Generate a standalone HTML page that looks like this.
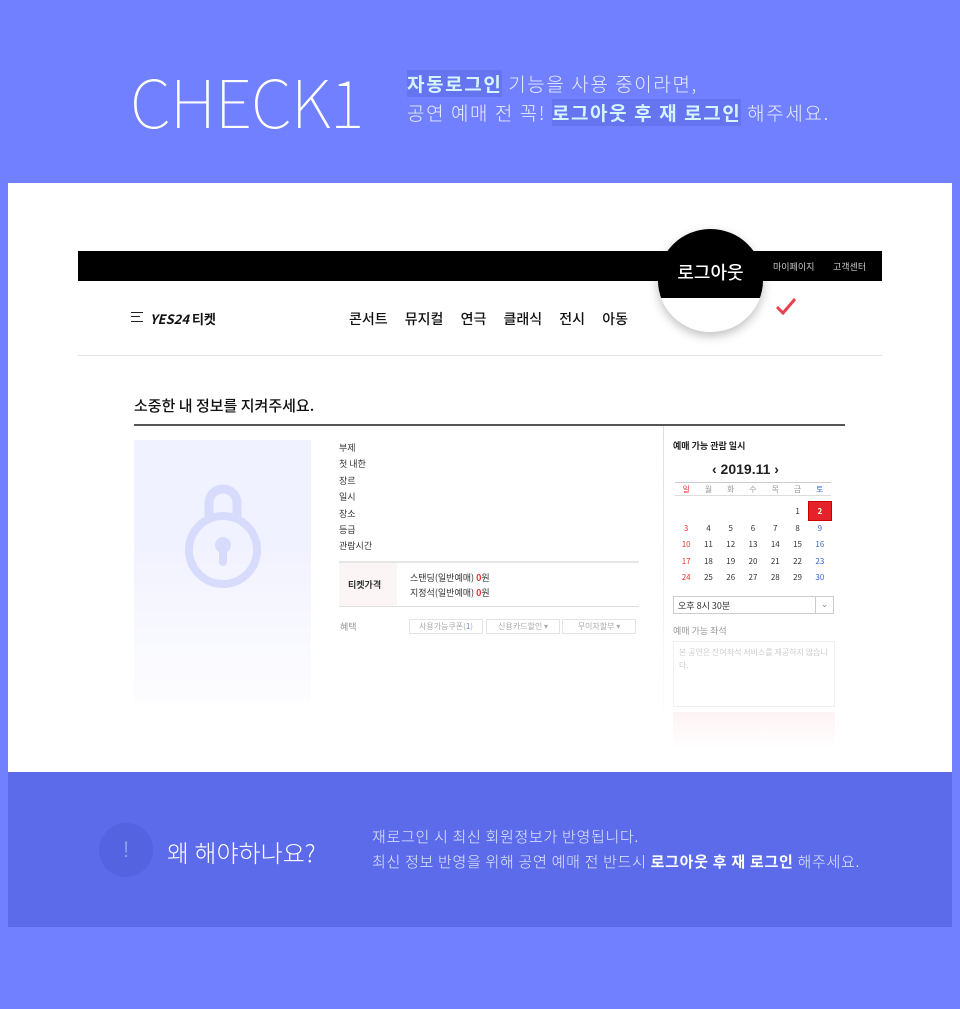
<!DOCTYPE html>
<html><head><meta charset="utf-8"><style>
*{margin:0;padding:0;box-sizing:border-box}
body{width:960px;height:1009px;background:#7180fe;position:relative;overflow:hidden;font-family:"Liberation Sans","Noto Sans CJK KR",sans-serif}
.a{position:absolute}
.k{font-family:"Noto Sans CJK KR","Liberation Sans",sans-serif}
.sm{font-size:9px;color:#333}
</style></head><body>
<div class="a" style="left:130px;top:64px;font-size:66px;font-weight:100;color:#fff;font-family:'Noto Sans CJK KR',sans-serif;letter-spacing:-1px;line-height:72px">CHECK1</div>
<div class="a k" style="left:407px;top:69px;font-size:19px;color:#e8ecff;line-height:29px;font-weight:300;letter-spacing:1.6px">
<div><span style="font-weight:700;color:#d5f4ff;background:#6575f0">자동로그인</span> 기능을 사용 중이라면,</div>
<div>공연 예매 전 꼭! <span style="font-weight:700;color:#d5f4ff;background:#6575f0">로그아웃 후 재 로그인</span> 해주세요.</div></div>

<div class="a" style="left:8px;top:183px;width:944px;height:589px;background:#fff"></div>
<div class="a" style="left:78px;top:251px;width:804px;height:30px;background:#000"></div>
<div class="a k" style="left:773px;top:260px;font-size:9px;color:#ccc">마이페이지</div>
<div class="a k" style="left:833px;top:260px;font-size:9px;color:#ccc">고객센터</div>
<div class="a" style="left:658px;top:229px;width:105px;height:103px;border-radius:50%;background:linear-gradient(#000 0,#000 67%,#fff 67%);box-shadow:0 4px 10px rgba(0,0,0,.25)"></div>
<div class="a k" style="left:658px;top:259px;width:105px;text-align:center;color:#fff;font-size:18px;font-weight:500">로그아웃</div>
<svg class="a" style="left:774px;top:296px" width="24" height="22"><path d="M3 11 L9 17 L21 3" stroke="#e8414f" stroke-width="3" fill="none"/></svg>
<div class="a" style="left:131px;top:312px;width:12px;height:10px;border-top:1.5px solid #222;border-bottom:1.5px solid #222"><div style="margin-top:3px;width:9px;border-top:1.5px solid #222"></div></div>
<div class="a k" style="left:150px;top:309px;font-size:13px;font-weight:700;color:#111"><i>YES24</i> 티켓</div>
<div class="a k" style="left:349px;top:309px;font-size:14px;color:#111;word-spacing:14px;font-weight:500">콘서트 뮤지컬 연극 클래식 전시 아동</div>
<div class="a" style="left:78px;top:355px;width:804px;height:1px;background:#e2e2e2"></div>
<div class="a k" style="left:134px;top:395px;font-size:15px;font-weight:500;color:#111">소중한 내 정보를 지켜주세요.</div>
<div class="a" style="left:134px;top:424px;width:711px;height:2px;background:#555"></div>

<div class="a" style="left:134px;top:440px;width:177px;height:262px;background:linear-gradient(#f1f2ff 40%,#fdfdff)"></div>
<svg class="a" style="left:180px;top:480px" width="90" height="115"><path d="M29 42 V23 a14 14 0 0 1 28 0 V42" stroke="#d8dcfc" stroke-width="9" fill="none"/><circle cx="43" cy="70" r="34" fill="none" stroke="#d8dcfc" stroke-width="8"/><circle cx="43" cy="65" r="8" fill="#d8dcfc"/><rect x="39" y="66" width="8" height="20" rx="4" fill="#d8dcfc"/></svg>

<div class="a k sm" style="left:339px;top:440px;line-height:16.4px">부제<br>첫 내한<br>장르<br>일시<br>장소<br>등급<br>관람시간</div>
<div class="a" style="left:339px;top:561px;width:300px;height:2px;background:#e6e6e6"></div>
<div class="a" style="left:339px;top:563px;width:58px;height:43px;background:#fbf5f5"></div>
<div class="a k" style="left:348px;top:578px;font-size:9px;font-weight:700;color:#333">티켓가격</div>
<div class="a k sm" style="left:410px;top:570px;line-height:15px">스탠딩(일반예매) <b style="color:#e33">0</b>원<br>지정석(일반예매) <b style="color:#e33">0</b>원</div>
<div class="a" style="left:339px;top:606px;width:300px;height:1px;background:#e0e0e0"></div>
<div class="a k" style="left:340px;top:620px;font-size:9px;color:#999">혜택</div>
<div class="a k" style="left:409px;top:619px;width:74px;height:15px;border:1px solid #e4e4e4;font-size:8px;color:#aaa;text-align:center;line-height:13px">사용가능쿠폰(<span style="color:#68c">1</span>)</div>
<div class="a k" style="left:486px;top:619px;width:74px;height:15px;border:1px solid #e4e4e4;font-size:8px;color:#aaa;text-align:center;line-height:13px">신용카드할인 ▾</div>
<div class="a k" style="left:562px;top:619px;width:74px;height:15px;border:1px solid #e4e4e4;font-size:8px;color:#aaa;text-align:center;line-height:13px">무이자할부 ▾</div>

<div class="a" style="left:663px;top:426px;width:1px;height:300px;background:linear-gradient(#ddd,#fff)"></div>
<div class="a k" style="left:673px;top:439px;font-size:9px;font-weight:700;color:#222">예매 가능 관람 일시</div>
<div class="a" style="left:712px;top:461px;font-size:14px;font-weight:700;color:#222">‹ 2019.11 ›</div>
<div class="a" style="left:675px;top:482px;width:156px;border-top:1px solid #ccc;border-bottom:1px solid #ddd;height:14px"></div>
<table class="a k" style="left:675px;top:482px;width:156px;border-collapse:collapse;font-size:8px;color:#333;text-align:center">
<tr style="height:14px;color:#999"><td style="color:#e33">일</td><td>월</td><td>화</td><td>수</td><td>목</td><td>금</td><td style="color:#36c">토</td></tr>
<tr style="height:6px"><td colspan="7"></td></tr>
<tr style="height:18px"><td></td><td></td><td></td><td></td><td></td><td>1</td><td style="background:#e6222a;color:#fff;font-weight:700;outline:1px solid #c00">2</td></tr>
<tr style="height:16.5px"><td style="color:#e33">3</td><td>4</td><td>5</td><td>6</td><td>7</td><td>8</td><td style="color:#36c">9</td></tr>
<tr style="height:16.5px"><td style="color:#e33">10</td><td>11</td><td>12</td><td>13</td><td>14</td><td>15</td><td style="color:#36c">16</td></tr>
<tr style="height:16.5px"><td style="color:#e33">17</td><td>18</td><td>19</td><td>20</td><td>21</td><td>22</td><td style="color:#36c">23</td></tr>
<tr style="height:16.5px"><td style="color:#e33">24</td><td>25</td><td>26</td><td>27</td><td>28</td><td>29</td><td style="color:#36c">30</td></tr></table>
<div class="a k" style="left:673px;top:596px;width:161px;height:18px;border:1px solid #ccc;font-size:9px;color:#333;padding:2px 4px">오후 8시 30분<span style="position:absolute;right:0;top:0;width:18px;height:16px;border-left:1px solid #ccc;text-align:center;color:#888">⌄</span></div>
<div class="a k" style="left:673px;top:624px;font-size:9px;color:#999">예매 가능 좌석</div>
<div class="a k" style="left:673px;top:641px;width:162px;height:66px;border:1px solid #f0f0f0;font-size:8px;color:#ccc;padding:4px 5px;line-height:13px">본 공연은 잔여좌석 서비스를 제공하지 않습니다.</div>
<div class="a" style="left:673px;top:712px;width:162px;height:36px;background:linear-gradient(#fdf3f4,#fff)"></div>

<div class="a" style="left:8px;top:772px;width:944px;height:155px;background:#5b6be9"></div>
<div class="a" style="left:99px;top:823px;width:54px;height:54px;border-radius:50%;background:#5464e0;color:#8d9af0;font-size:22px;text-align:center;line-height:54px;font-weight:100">!</div>
<div class="a k" style="left:167px;top:834px;font-size:24px;color:#fff;font-weight:300">왜 해야하나요?</div>
<div class="a k" style="left:372px;top:824px;font-size:15px;color:#e5e9ff;line-height:25px;font-weight:300;letter-spacing:0.7px">재로그인 시 최신 회원정보가 반영됩니다.<br>최신 정보 반영을 위해 공연 예매 전 반드시 <b style="color:#fff;font-weight:700">로그아웃 후 재 로그인</b> 해주세요.</div>
</body></html>
